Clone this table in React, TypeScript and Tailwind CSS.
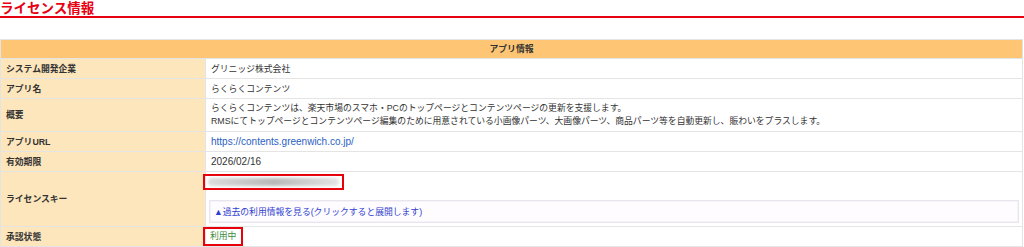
import React from 'react';

const jp = '"Liberation Sans", "Noto Sans CJK JP", sans-serif';

type Row = { label: string; h: string; body: React.ReactNode };

const ROWS: Row[] = [
  { label: 'システム開発企業', h: 'h-[20px]', body: 'グリニッジ株式会社' },
  { label: 'アプリ名', h: 'h-[20px]', body: 'らくらくコンテンツ' },
  {
    label: '概要',
    h: 'h-[33px]',
    body: (
      <div className="leading-[13px]">
        <p>らくらくコンテンツは、楽天市場のスマホ・PCのトップページとコンテンツページの更新を支援します。</p>
        <p>RMSにてトップページとコンテンツページ編集のために用意されている小画像パーツ、大画像パーツ、商品パーツ等を自動更新し、賑わいをプラスします。</p>
      </div>
    ),
  },
  {
    label: 'アプリURL',
    h: 'h-[20px]',
    body: <a className="text-[10px] text-[#2a5fc4]">https://contents.greenwich.co.jp/</a>,
  },
  { label: '有効期限', h: 'h-[20px]', body: <span className="text-[10px]">2026/02/16</span> },
];

function LicenseKey() {
  return (
    <div className="flex flex-col items-start pt-[2px] pb-[3px]">
      {/* masked key */}
      <div className="ml-[-6px] w-[141px] h-[16px] border-2 border-[#e8000b] flex items-center px-[3px]">
        <div className="w-full h-[8px] rounded-full bg-gradient-to-r from-[#dcdcdc] via-[#b9b9b9] to-[#e4e4e4] blur-[1.5px]" />
      </div>
      <div className="mt-[10px] w-full h-[23px] border border-[#e9e5ee] bg-[#fefcff] shadow-[inset_0_0_0_1px_#f6f3f8] flex items-center pl-[4px]">
        <a className="text-[#2f3fd0] cursor-pointer">▲過去の利用情報を見る(クリックすると展開します)</a>
      </div>
    </div>
  );
}

export default function App() {
  return (
    <div className="w-[1024px] h-[247px] overflow-hidden bg-white text-[#333]" style={{ fontFamily: jp }}>
      <h2 className="pt-px leading-[15px] text-[13.5px] font-bold text-[#e60012] border-b-2 border-[#e60012]">
        ライセンス情報
      </h2>

      <table className="mt-[21px] w-[1023px] border-collapse text-[8.8px] leading-[12px]">
        <tbody>
          <tr className="h-[19px]">
            <th colSpan={2} className="border border-[#e4e4e4] bg-[#fec674] font-bold text-center">
              アプリ情報
            </th>
          </tr>
          {ROWS.map((r) => (
            <tr key={r.label} className={r.h}>
              <th className="w-[205px] border border-[#e4e4e4] bg-[#fde6bc] pl-[5px] text-left font-bold">
                {r.label}
              </th>
              <td className="border border-[#e4e4e4] bg-white pl-[5px]">{r.body}</td>
            </tr>
          ))}
          <tr className="h-[55px]">
            <th className="border border-[#e4e4e4] bg-[#fde6bc] pl-[5px] text-left font-bold">ライセンスキー</th>
            <td className="border border-[#e4e4e4] bg-white px-[3px]">
              <LicenseKey />
            </td>
          </tr>
          <tr className="h-[20px]">
            <th className="border border-[#e4e4e4] bg-[#fde6bc] pl-[5px] text-left font-bold">承認状態</th>
            <td className="border border-[#e4e4e4] bg-white pl-0">
              <span className="inline-block ml-[-3px] border-2 border-[#e8000b] px-[5px] leading-[15px] text-[#3d8b3d]">
                利用中
              </span>
            </td>
          </tr>
        </tbody>
      </table>
    </div>
  );
}
